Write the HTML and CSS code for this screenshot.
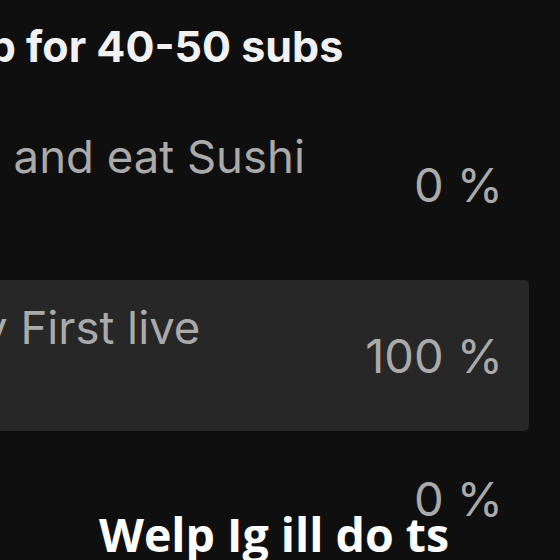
FILE: index.html
```html
<!DOCTYPE html>
<html>
<head>
<meta charset="utf-8">
<link rel="stylesheet" href="styles.css">
</head>
<body>
<main class="post">
  <h1 class="question">Meetup for 40-50 subs</h1>
  <ul class="poll">
    <li class="option option-sushi">
      <span class="label">Go to Japan and eat Sushi<br>together</span>
      <span class="pct">0 %</span>
    </li>
    <li class="option option-live selected">
      <span class="label">React To My First live<br>stream</span>
      <span class="pct">100 %</span>
    </li>
    <li class="option option-qa">
      <span class="label">Q&amp;A</span>
      <span class="pct">0 %</span>
    </li>
  </ul>
  <p class="caption">Welp Ig ill do ts</p>
</main>
</body>
</html>
```

FILE: styles.css
```css
html, body {
  margin: 0;
  padding: 0;
  background: #0f0f0f;
  width: 560px;
  height: 560px;
  overflow: hidden;
}

.post {
  position: relative;
  width: 560px;
  height: 560px;
  overflow: hidden;
  font-family: Inter, "Liberation Sans", sans-serif;
}

.question {
  margin: 18px 0 0 -145px;
  font-size: 43px;
  font-weight: 700;
  color: #f1f1f1;
  line-height: 56px;
  white-space: nowrap;
}

.poll {
  list-style: none;
  margin: 35px 0 0 -284px;
  padding: 0;
  width: 813px;
  display: flex;
  flex-direction: column;
  gap: 20px;
}

.option {
  display: flex;
  align-items: center;
  justify-content: space-between;
  padding: 19.5px 26px 19.5px 24px;
  border-radius: 5px;
  color: #aaaaaa;
}

.option.selected {
  background: #272727;
}

.label {
  align-self: flex-start;
  font-size: 45.5px;
  line-height: 56px;
  white-space: nowrap;
}

.pct {
  font-size: 47px;
  line-height: 56px;
}

.option-qa .label {
  align-self: center;
}

.caption {
  position: absolute;
  left: 0;
  right: 0;
  bottom: 0;
  margin: 0 0 -4px;
  padding-right: 12px;
  text-align: center;
  font-family: "Open Sans", sans-serif;
  font-weight: 700;
  font-size: 46.5px;
  line-height: 60px;
  color: #ffffff;
}
```
